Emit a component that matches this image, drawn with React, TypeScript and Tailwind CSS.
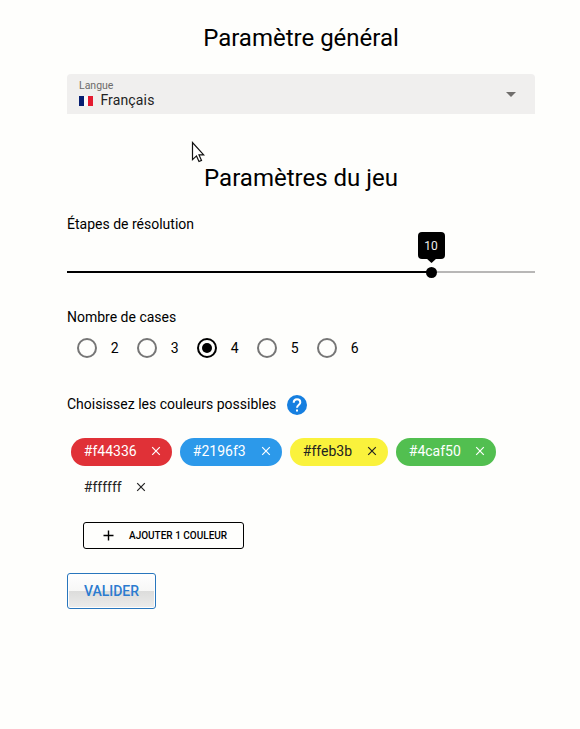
const chips = [
  { label: '#f44336', box: 'w-[101px] bg-[#e03137] text-white' },
  { label: '#2196f3', box: 'w-[102px] bg-[#2c99ea] text-white' },
  { label: '#ffeb3b', box: 'w-[98px] bg-[#faf23c] text-[#222]' },
  { label: '#4caf50', box: 'w-[100px] bg-[#52bf50] text-white' },
  { label: '#ffffff', box: 'w-[86px] text-[#222]' },
];

function Chip({ label, box }: { label: string; box: string }) {
  return (
    <span className={`flex h-7 items-center justify-between rounded-full pl-[12.8px] pr-[11px] leading-5 ${box}`}>
      <span className="relative -top-px">{label}</span>
      <svg className="relative -top-px size-[10px]" viewBox="0 0 10 10" fill="none" stroke="currentColor" strokeWidth="1.2">
        <path d="M1.200 1.200l7.600 7.600M8.800 1.200L1.200 8.800" />
      </svg>
    </span>
  );
}

function Radio({ value, checked }: { value: number; checked?: boolean }) {
  return (
    <label className="flex w-[60px] items-center">
      <span
        className={`flex size-5 items-center justify-center rounded-full border-2 ${checked ? 'border-black' : 'border-[#767676]'}`}
      >
        {checked && <span className="size-[10px] rounded-full bg-black" />}
      </span>
      <span className="ml-[13.7px]">{value}</span>
    </label>
  );
}

export default function App() {
  return (
    <main className="relative h-[729px] w-[580px] bg-[#fefefc] pl-[67px] pr-[45px] pt-[22px] font-['Roboto',sans-serif] text-sm text-black">
      <h1 className="h-[52px] text-center text-2xl leading-8">Paramètre général</h1>

      <div className="flex h-10 items-center justify-between rounded-t bg-[#f0efee] pl-3 pr-[19px]">
        <div>
          <div className="-mt-px h-[13px] text-[10.5px] leading-[13px] text-[#6c6b6a]">Langue</div>
          <div className="flex h-4 items-center leading-4 text-[#222]">
            <span className="mr-[7.400px] mt-[2px] flex h-[10px] w-[14px]">
              <span className="w-[5px] bg-[#071f72]" />
              <span className="w-[4px] bg-[#fafafa]" />
              <span className="w-[5px] bg-[#e41b30]" />
            </span>
            <span className="tracking-[0.15px]">Français</span>
          </div>
        </div>
        <svg className="h-[5px] w-[10px]" viewBox="0 0 10 5" fill="#706e6c">
          <path d="M0 0h10L5 5z" />
        </svg>
      </div>

      <h1 className="mt-12 h-[52px] text-center text-2xl leading-8">Paramètres du jeu</h1>

      <div className="h-5 leading-5">Étapes de résolution</div>
      <div className="relative mt-[37px] flex h-0.5">
        <span className="w-[364px] bg-black" />
        <span className="flex-1 bg-[#b8b7b6]" />
        <span className="absolute left-[359px] top-[-4px] size-[11px] rounded-full bg-black" />
        <span className="absolute left-[351px] top-[-39px] flex h-[27px] w-[27px] items-center justify-center rounded bg-black pr-px text-xs text-[#eee]">
          10
        </span>
        <svg className="absolute left-[359px] top-[-13px] h-[5px] w-[11px]" viewBox="0 0 11 5">
          <path d="M0 0h11L5.500 5z" />
        </svg>
      </div>

      <div className="mt-[34px] h-5 leading-5">Nombre de cases</div>
      <div className="mt-[11px] flex h-5 pl-[10px] leading-5">
        <Radio value={2} />
        <Radio value={3} />
        <Radio value={4} checked />
        <Radio value={5} />
        <Radio value={6} />
      </div>

      <div className="mt-9 flex h-[22px] items-center leading-5">
        <span className="relative -top-px">Choisissez les couleurs possibles</span>
        <svg className="ml-[11px] size-5" viewBox="0 0 20 20">
          <circle cx="10" cy="10" r="10" fill="#167fe0" />
          <path d="M6.700 7.700C6.700 5.500 8.100 4.200 10 4.200s3.300 1.300 3.300 3.200c0 2.200-3.300 2.500-3.300 5.400" fill="none" stroke="white" strokeWidth="2" />
          <path d="M9 14.600h2v2H9z" fill="white" />
        </svg>
      </div>

      <div className="mt-[22px] flex flex-wrap gap-2 pl-1">
        {chips.map((chip) => (
          <Chip key={chip.label} {...chip} />
        ))}
      </div>

      <button className="ml-4 mt-5 flex h-[27px] w-[161px] items-center rounded-[3px] border border-black pl-[19px] text-[10px] font-medium">
        <svg className="mr-[15px] size-[11px]" viewBox="0 0 11 11" stroke="black" strokeWidth="1.4">
          <path d="M5.500 0.500v10M0.500 5.500h10" />
        </svg>
        <span className="relative top-px">AJOUTER 1 COULEUR</span>
      </button>

      <button className="mt-6 flex h-9 w-[89px] rounded-[3px] border border-[#2876bd] bg-[#fefefe] p-px text-sm font-medium text-[#2b7bd0]">
        <span className="flex h-full w-full items-center justify-center bg-[linear-gradient(#fefefe_0%,#f7f7f6_50%,#dcdcdb_50%,#ebebea_100%)]">
          VALIDER
        </span>
      </button>

      <svg className="absolute left-[191px] top-[141px] h-[22px] w-[14px]" viewBox="0 0 14 22">
        <path
          d="M1.500 1.500v17.200l4-3.800 2.500 5.600 2.500-1.100-2.500-5.500h4.700z"
          fill="white"
          stroke="#111"
          strokeWidth="1.200"
        />
      </svg>
    </main>
  );
}
